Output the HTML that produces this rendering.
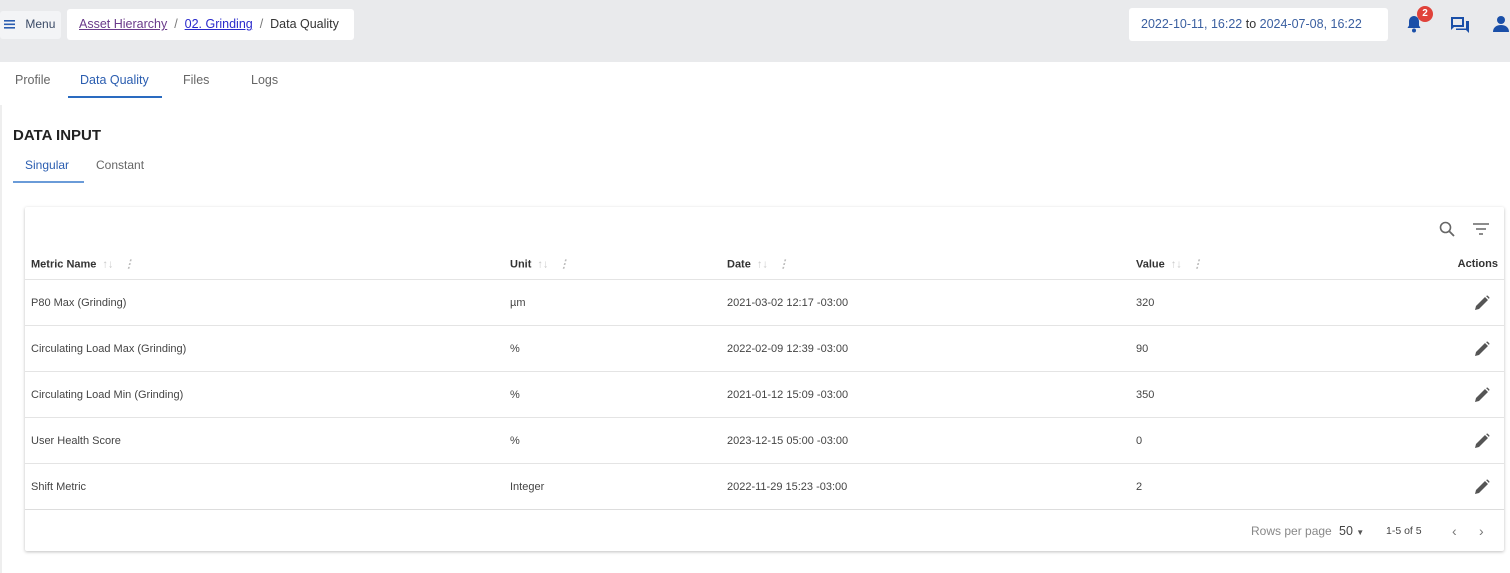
<!DOCTYPE html>
<html><head><meta charset="utf-8">
<style>
*{box-sizing:border-box;margin:0;padding:0}
body{width:1510px;height:573px;overflow:hidden;background:#fff;font-family:"Liberation Sans",sans-serif;color:#222;position:relative}
.top{position:absolute;left:0;top:0;width:1510px;height:62px;background:#e9eaec}
.box{position:absolute;background:#fff;border-radius:3px}
.abs{position:absolute;white-space:nowrap}
.tab{position:absolute;top:73px;font-size:12.5px;color:#666}
.card{position:absolute;left:25px;top:207px;width:1479px;height:344px;background:#fff;box-shadow:0 1px 3px rgba(0,0,0,.25);border-radius:2px}
.row{position:absolute;left:0;width:1479px;border-top:1px solid #e4e4e4;font-size:11px;color:#444}
.row span{position:absolute;top:50%;transform:translateY(-50%)}
.hd{font-weight:bold;color:#333}
.sort{color:#ccc;font-weight:normal;margin-left:6px}
.dots{color:#bbb;font-weight:bold;margin-left:10px}
.pen{position:absolute;right:14px;top:50%;transform:translateY(-50%)}
</style></head><body>
<div class="top"></div>
<div class="box" style="left:0;top:11px;width:61px;height:28px;background:#f3f4f6"></div>
<div class="abs" style="left:4px;top:17px;font-size:12px;color:#2a5db0">
<svg width="12" height="10" style="vertical-align:-1px"><rect y="1" width="11" height="1.6" fill="#2a5db0"/><rect y="4.5" width="11" height="1.6" fill="#2a5db0"/><rect y="8" width="11" height="1.6" fill="#2a5db0"/></svg> <span style="margin-left:6px;color:#3a4a66">Menu</span></div>
<div class="box" style="left:67px;top:9px;width:287px;height:31px"></div>
<div class="abs" style="left:79px;top:17px;font-size:12.5px"><span style="color:#6a3a8a;text-decoration:underline">Asset Hierarchy</span> <span style="color:#777">&nbsp;/&nbsp;</span> <span style="color:#2a2acc;text-decoration:underline">02. Grinding</span> <span style="color:#777">&nbsp;/&nbsp;</span> <span style="color:#333">Data Quality</span></div>
<div class="box" style="left:1129px;top:8px;width:259px;height:33px"></div>
<div class="abs" style="left:1141px;top:17px;font-size:12.5px;color:#3a5fa0">2022-10-11, 16:22 <span style="color:#333">to</span> 2024-07-08, 16:22</div>
<svg class="abs" style="left:1406px;top:15px" width="16" height="18" viewBox="0 0 16 18"><path d="M8 1c-3 0-5 2.5-5 5.5v4L1.5 13h13L13 10.5v-4C13 3.5 11 1 8 1z" fill="#1a4fa8"/><circle cx="8" cy="15.5" r="2" fill="#1a4fa8"/></svg>
<div class="abs" style="left:1417px;top:6px;width:16px;height:16px;border-radius:50%;background:#e0423a;color:#fff;font-size:10px;font-weight:bold;text-align:center;line-height:16px">2</div>
<svg class="abs" style="left:1450px;top:16px" width="20" height="18" viewBox="0 0 20 18"><path d="M1 1h13v10H4l-3 3z" fill="#1a4fa8"/><path d="M3 3h9v6H3z" fill="#e9eaec"/><path d="M16 5h3v12l-3-3H6v-1.5h10z" fill="#1a4fa8"/></svg>
<svg class="abs" style="left:1493px;top:15px" width="17" height="18" viewBox="0 0 17 18"><circle cx="8" cy="5" r="4" fill="#1a4fa8"/><path d="M0 17c0-5 4-7 8-7s8 2 8 7z" fill="#1a4fa8"/></svg>

<div class="tab" style="left:15px">Profile</div>
<div class="tab" style="left:80px;color:#2a5db0">Data Quality</div>
<div style="position:absolute;left:68px;top:96px;width:94px;height:2px;background:#2a6bc0"></div>
<div class="tab" style="left:183px">Files</div>
<div class="tab" style="left:251px">Logs</div>
<div style="position:absolute;left:0;top:105px;width:2px;height:468px;background:#eee"></div>

<div class="abs" style="left:13px;top:127px;font-size:15px;font-weight:bold;color:#222">DATA INPUT</div>
<div class="abs" style="left:25px;top:158px;font-size:12px;color:#2a5db0">Singular</div>
<div class="abs" style="left:96px;top:158px;font-size:12px;color:#666">Constant</div>
<div style="position:absolute;left:13px;top:181px;width:71px;height:2px;background:#6a9bd8"></div>

<div class="card">
<svg class="abs" style="left:1414px;top:14px" width="16" height="16" viewBox="0 0 16 16"><circle cx="6.5" cy="6.5" r="5" fill="none" stroke="#666" stroke-width="1.6"/><path d="M10 10l5 5" stroke="#666" stroke-width="1.8"/></svg>
<svg class="abs" style="left:1447px;top:16px" width="18" height="12" viewBox="0 0 18 12"><path d="M1 1h16M4 6h10M7 11h4" stroke="#666" stroke-width="1.6"/></svg>
<div class="row hd" style="top:41px;height:31px;border-top:none"><span style="left:6px">Metric Name<i class="sort">↑↓</i><i class="dots">⋮</i></span><span style="left:485px">Unit<i class="sort">↑↓</i><i class="dots">⋮</i></span><span style="left:702px">Date<i class="sort">↑↓</i><i class="dots">⋮</i></span><span style="left:1111px">Value<i class="sort">↑↓</i><i class="dots">⋮</i></span><span style="right:6px">Actions</span></div>
<div class="row" style="top:72px;height:46px"><span style="left:6px">P80 Max (Grinding)</span><span style="left:485px">µm</span><span style="left:702px">2021-03-02 12:17 -03:00</span><span style="left:1111px">320</span><svg class="pen" width="16" height="16" viewBox="0 0 16 16"><path d="M1 15l1-4 9-9 3 3-9 9z M12 1l1.5-.5 2 2L15 4z" fill="#555"/></svg></div>
<div class="row" style="top:118px;height:46px"><span style="left:6px">Circulating Load Max (Grinding)</span><span style="left:485px">%</span><span style="left:702px">2022-02-09 12:39 -03:00</span><span style="left:1111px">90</span><svg class="pen" width="16" height="16" viewBox="0 0 16 16"><path d="M1 15l1-4 9-9 3 3-9 9z M12 1l1.5-.5 2 2L15 4z" fill="#555"/></svg></div>
<div class="row" style="top:164px;height:46px"><span style="left:6px">Circulating Load Min (Grinding)</span><span style="left:485px">%</span><span style="left:702px">2021-01-12 15:09 -03:00</span><span style="left:1111px">350</span><svg class="pen" width="16" height="16" viewBox="0 0 16 16"><path d="M1 15l1-4 9-9 3 3-9 9z M12 1l1.5-.5 2 2L15 4z" fill="#555"/></svg></div>
<div class="row" style="top:210px;height:46px"><span style="left:6px">User Health Score</span><span style="left:485px">%</span><span style="left:702px">2023-12-15 05:00 -03:00</span><span style="left:1111px">0</span><svg class="pen" width="16" height="16" viewBox="0 0 16 16"><path d="M1 15l1-4 9-9 3 3-9 9z M12 1l1.5-.5 2 2L15 4z" fill="#555"/></svg></div>
<div class="row" style="top:256px;height:46px"><span style="left:6px">Shift Metric</span><span style="left:485px">Integer</span><span style="left:702px">2022-11-29 15:23 -03:00</span><span style="left:1111px">2</span><svg class="pen" width="16" height="16" viewBox="0 0 16 16"><path d="M1 15l1-4 9-9 3 3-9 9z M12 1l1.5-.5 2 2L15 4z" fill="#555"/></svg></div>
<div class="row" style="top:302px;height:42px;border-top:1px solid #ddd"><span style="left:1226px;color:#888;font-size:12px">Rows per page <b style="font-weight:normal;color:#444;font-size:12.5px;margin-left:4px">50</b> <span style="position:static;transform:none;font-size:8px;color:#555">▼</span></span><span style="left:1361px;font-size:10.5px;color:#444">1-5 of 5</span><span style="left:1427px;color:#777;font-size:14px">‹</span><span style="left:1454px;color:#777;font-size:14px">›</span></div>
</div>
</body></html>
